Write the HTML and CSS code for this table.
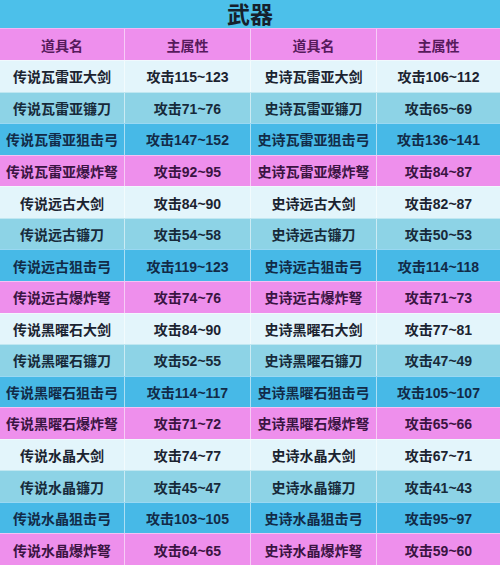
FILE: index.html
```html
<!DOCTYPE html>
<html lang="zh">
<head>
<meta charset="utf-8">
<title>武器</title>
<link rel="stylesheet" href="styles.css">
</head>
<body>
<div class="page">
  <div class="title">武器</div>
  <div class="table">
    <div class="row head"><div class="cell">道具名</div><div class="cell">主属性</div><div class="cell">道具名</div><div class="cell">主属性</div></div>

    <div class="row light"><div class="cell">传说瓦雷亚大剑</div><div class="cell">攻击115~123</div><div class="cell">史诗瓦雷亚大剑</div><div class="cell">攻击106~112</div></div>
    <div class="row mid"><div class="cell">传说瓦雷亚镰刀</div><div class="cell">攻击71~76</div><div class="cell">史诗瓦雷亚镰刀</div><div class="cell">攻击65~69</div></div>
    <div class="row blue"><div class="cell">传说瓦雷亚狙击弓</div><div class="cell">攻击147~152</div><div class="cell">史诗瓦雷亚狙击弓</div><div class="cell">攻击136~141</div></div>
    <div class="row pink"><div class="cell">传说瓦雷亚爆炸弩</div><div class="cell">攻击92~95</div><div class="cell">史诗瓦雷亚爆炸弩</div><div class="cell">攻击84~87</div></div>

    <div class="row light"><div class="cell">传说远古大剑</div><div class="cell">攻击84~90</div><div class="cell">史诗远古大剑</div><div class="cell">攻击82~87</div></div>
    <div class="row mid"><div class="cell">传说远古镰刀</div><div class="cell">攻击54~58</div><div class="cell">史诗远古镰刀</div><div class="cell">攻击50~53</div></div>
    <div class="row blue"><div class="cell">传说远古狙击弓</div><div class="cell">攻击119~123</div><div class="cell">史诗远古狙击弓</div><div class="cell">攻击114~118</div></div>
    <div class="row pink"><div class="cell">传说远古爆炸弩</div><div class="cell">攻击74~76</div><div class="cell">史诗远古爆炸弩</div><div class="cell">攻击71~73</div></div>

    <div class="row light"><div class="cell">传说黑曜石大剑</div><div class="cell">攻击84~90</div><div class="cell">史诗黑曜石大剑</div><div class="cell">攻击77~81</div></div>
    <div class="row mid"><div class="cell">传说黑曜石镰刀</div><div class="cell">攻击52~55</div><div class="cell">史诗黑曜石镰刀</div><div class="cell">攻击47~49</div></div>
    <div class="row blue"><div class="cell">传说黑曜石狙击弓</div><div class="cell">攻击114~117</div><div class="cell">史诗黑曜石狙击弓</div><div class="cell">攻击105~107</div></div>
    <div class="row pink"><div class="cell">传说黑曜石爆炸弩</div><div class="cell">攻击71~72</div><div class="cell">史诗黑曜石爆炸弩</div><div class="cell">攻击65~66</div></div>

    <div class="row light"><div class="cell">传说水晶大剑</div><div class="cell">攻击74~77</div><div class="cell">史诗水晶大剑</div><div class="cell">攻击67~71</div></div>
    <div class="row mid"><div class="cell">传说水晶镰刀</div><div class="cell">攻击45~47</div><div class="cell">史诗水晶镰刀</div><div class="cell">攻击41~43</div></div>
    <div class="row blue"><div class="cell">传说水晶狙击弓</div><div class="cell">攻击103~105</div><div class="cell">史诗水晶狙击弓</div><div class="cell">攻击95~97</div></div>
    <div class="row pink"><div class="cell">传说水晶爆炸弩</div><div class="cell">攻击64~65</div><div class="cell">史诗水晶爆炸弩</div><div class="cell">攻击59~60</div></div>
  </div>
</div>
</body>
</html>
```

FILE: styles.css
```css
html, body {
  margin: 0;
  padding: 0;
}

body {
  width: 500px;
  height: 565px;
  overflow: hidden;
  font-family: "Liberation Sans", "Noto Sans CJK SC", sans-serif;
  font-weight: bold;
  color: #1b2330;
}

.page {
  display: flex;
  flex-direction: column;
  width: 500px;
  height: 565px;
}

.title {
  height: 28px;
  flex: 0 0 28px;
  background: #4cc0ea;
  color: #16202c;
  font-size: 23px;
  line-height: 28px;
  text-align: center;
  box-sizing: border-box;
  padding-top: 1px;
}

.table {
  flex: 1;
  display: grid;
  grid-template-rows: 32px repeat(16, 1fr);
}

.row {
  display: grid;
  grid-template-columns: 124px 126px 126px 124px;
  border-top: 1px solid rgba(255, 255, 255, 0.45);
}

.row.head {
  border-top: 1px solid rgba(255, 255, 255, 0.35);
}

.cell {
  display: flex;
  align-items: center;
  justify-content: center;
  font-size: 14px;
  white-space: nowrap;
  border-left: 1px solid rgba(255, 255, 255, 0.55);
}

.cell:first-child {
  border-left: none;
}

.head {
  background: #ee8fed;
  color: #561a5c;
}

.light {
  background: #e3f5fb;
  color: #1b2330;
}

.mid {
  background: #8dd3e6;
  color: #172a3a;
}

.blue {
  background: #47b9e7;
  color: #122b48;
}

.pink {
  background: #ee8fec;
  color: #3a1442;
}
```
